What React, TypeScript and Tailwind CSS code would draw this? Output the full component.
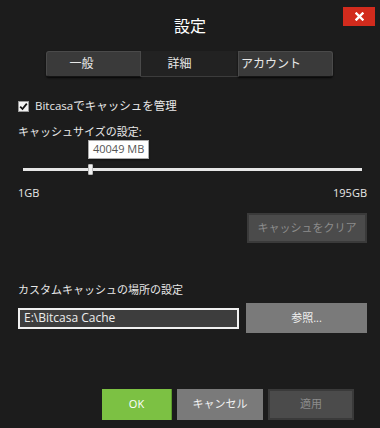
import React from "react";

const font = { fontFamily: '"Open Sans", "Noto Sans CJK JP", sans-serif' };

export default function App() {
  const valueMB = 40049;
  const minGB = 1;
  const maxGB = 195;
  const frac = (valueMB / 1024 - minGB) / (maxGB - minGB);
  const trackW = 339;
  const thumbX = Math.round(frac * trackW);

  return (
    <div
      className="w-[380px] h-[428px] bg-[#1c1c1c] text-[#e8e8e8] overflow-hidden relative"
      style={font}
    >
      <button className="absolute top-[7px] right-[5px] w-[32px] h-[19px] bg-[#d22b1d] flex items-center justify-center">
        <svg width="9" height="9" viewBox="0 0 9 9">
          <path d="M1.5 1.5 L7.5 7.5 M7.5 1.5 L1.5 7.5" stroke="#fff" strokeWidth="2.4" strokeLinecap="square" />
        </svg>
      </button>

      <div className="pt-[16px] h-[38px] text-center text-[16px] leading-[20px] text-white">設定</div>

      <div className="mt-[13px] ml-[46px] w-[287px] h-[26px] flex text-[12px] leading-none">
        <div className="w-[95px] h-full bg-[#3a3a3a] rounded-l-[3px] border border-[#4a4a4a] border-b-[#151515] shadow-[0_1px_2px_rgba(0,0,0,0.8)] flex items-center justify-center pr-[24px]">
          一般
        </div>
        <div className="w-[97px] h-full bg-[#222222] border-b border-[#3c3c3c] flex items-center justify-center pr-[20px]">
          詳細
        </div>
        <div className="flex-1 h-full bg-[#3a3a3a] rounded-r-[3px] border border-[#4a4a4a] border-b-[#151515] shadow-[0_1px_2px_rgba(0,0,0,0.8)] flex items-center pl-[2px]">
          アカウント
        </div>
      </div>

      <div className="mt-[23px] ml-[18px] flex items-center gap-[6px] h-[12px]">
        <div className="w-[11px] h-[11px] bg-[#f2f2f2] border border-[#999] flex items-center justify-center">
          <svg width="9" height="9" viewBox="0 0 9 9">
            <path d="M1.2 4.6 L3.5 7 L7.8 1.6" stroke="#111" strokeWidth="1.8" fill="none" />
          </svg>
        </div>
        <span className="text-[11.5px] leading-none">Bitcasaでキャッシュを管理</span>
      </div>

      <div className="mt-[13px] ml-[18px] text-[11px] leading-[13px]">キャッシュサイズの設定:</div>

      <div className="ml-[23px] w-[339px] relative mt-[2px] h-[36px]">
        <div
          className="absolute top-[0px] h-[19px] px-[4px] bg-white border border-[#aaa] text-[#555] text-[11px] flex items-center whitespace-nowrap shadow-[0_1px_2px_rgba(0,0,0,0.4)]"
          style={{ left: thumbX - 2 }}
        >
          40049 MB
        </div>
        <div className="absolute top-[28px] left-0 right-0 h-[3px] bg-[#e6e6e6]" />
        <div
          className="absolute top-[24px] w-[5px] h-[11px] bg-[#f0f0f0] rounded-[1px] border border-[#bbb]"
          style={{ left: thumbX - 2 }}
        />
      </div>

      <div className="mt-[10px] mr-[13px] ml-[18px] flex justify-between text-[11px] leading-[13px]">
        <span>1GB</span>
        <span>195GB</span>
      </div>

      <div className="mt-[14px] flex justify-end pr-[13px]">
        <button className="w-[120px] h-[30px] bg-[#4b4b4b] border-2 border-[#3a3a3a] text-[#8c8c8c] text-[11px]">
          キャッシュをクリア
        </button>
      </div>

      <div className="mt-[40px] ml-[18px] text-[11px] leading-[13px]">カスタムキャッシュの場所の設定</div>

      <div className="mt-[7px] ml-[18px] mr-[13px] flex items-center gap-[7px]">
        <div className="w-[221px] h-[21px] bg-[#3d3d3d] border-2 border-[#f0f0f0] flex items-center px-[4px] text-[12px] text-[#eeeeee]">
          E:\Bitcasa Cache
        </div>
        <button className="flex-1 h-[30px] bg-[#7a7a7a] text-[#f0f0f0] text-[11px]">参照...</button>
      </div>

      <div className="mt-[56px] flex pl-[102px] gap-[5px]">
        <button className="w-[70px] h-[31px] bg-[#7cc143] text-white text-[11px] border-r border-[#5a9a2a]">OK</button>
        <button className="w-[86px] h-[31px] bg-[#7a7a7a] text-[#f2f2f2] text-[11px]">キャンセル</button>
        <button className="w-[86px] h-[31px] bg-[#4b4b4b] border-2 border-[#3a3a3a] text-[#8c8c8c] text-[11px]">適用</button>
      </div>
    </div>
  );
}
